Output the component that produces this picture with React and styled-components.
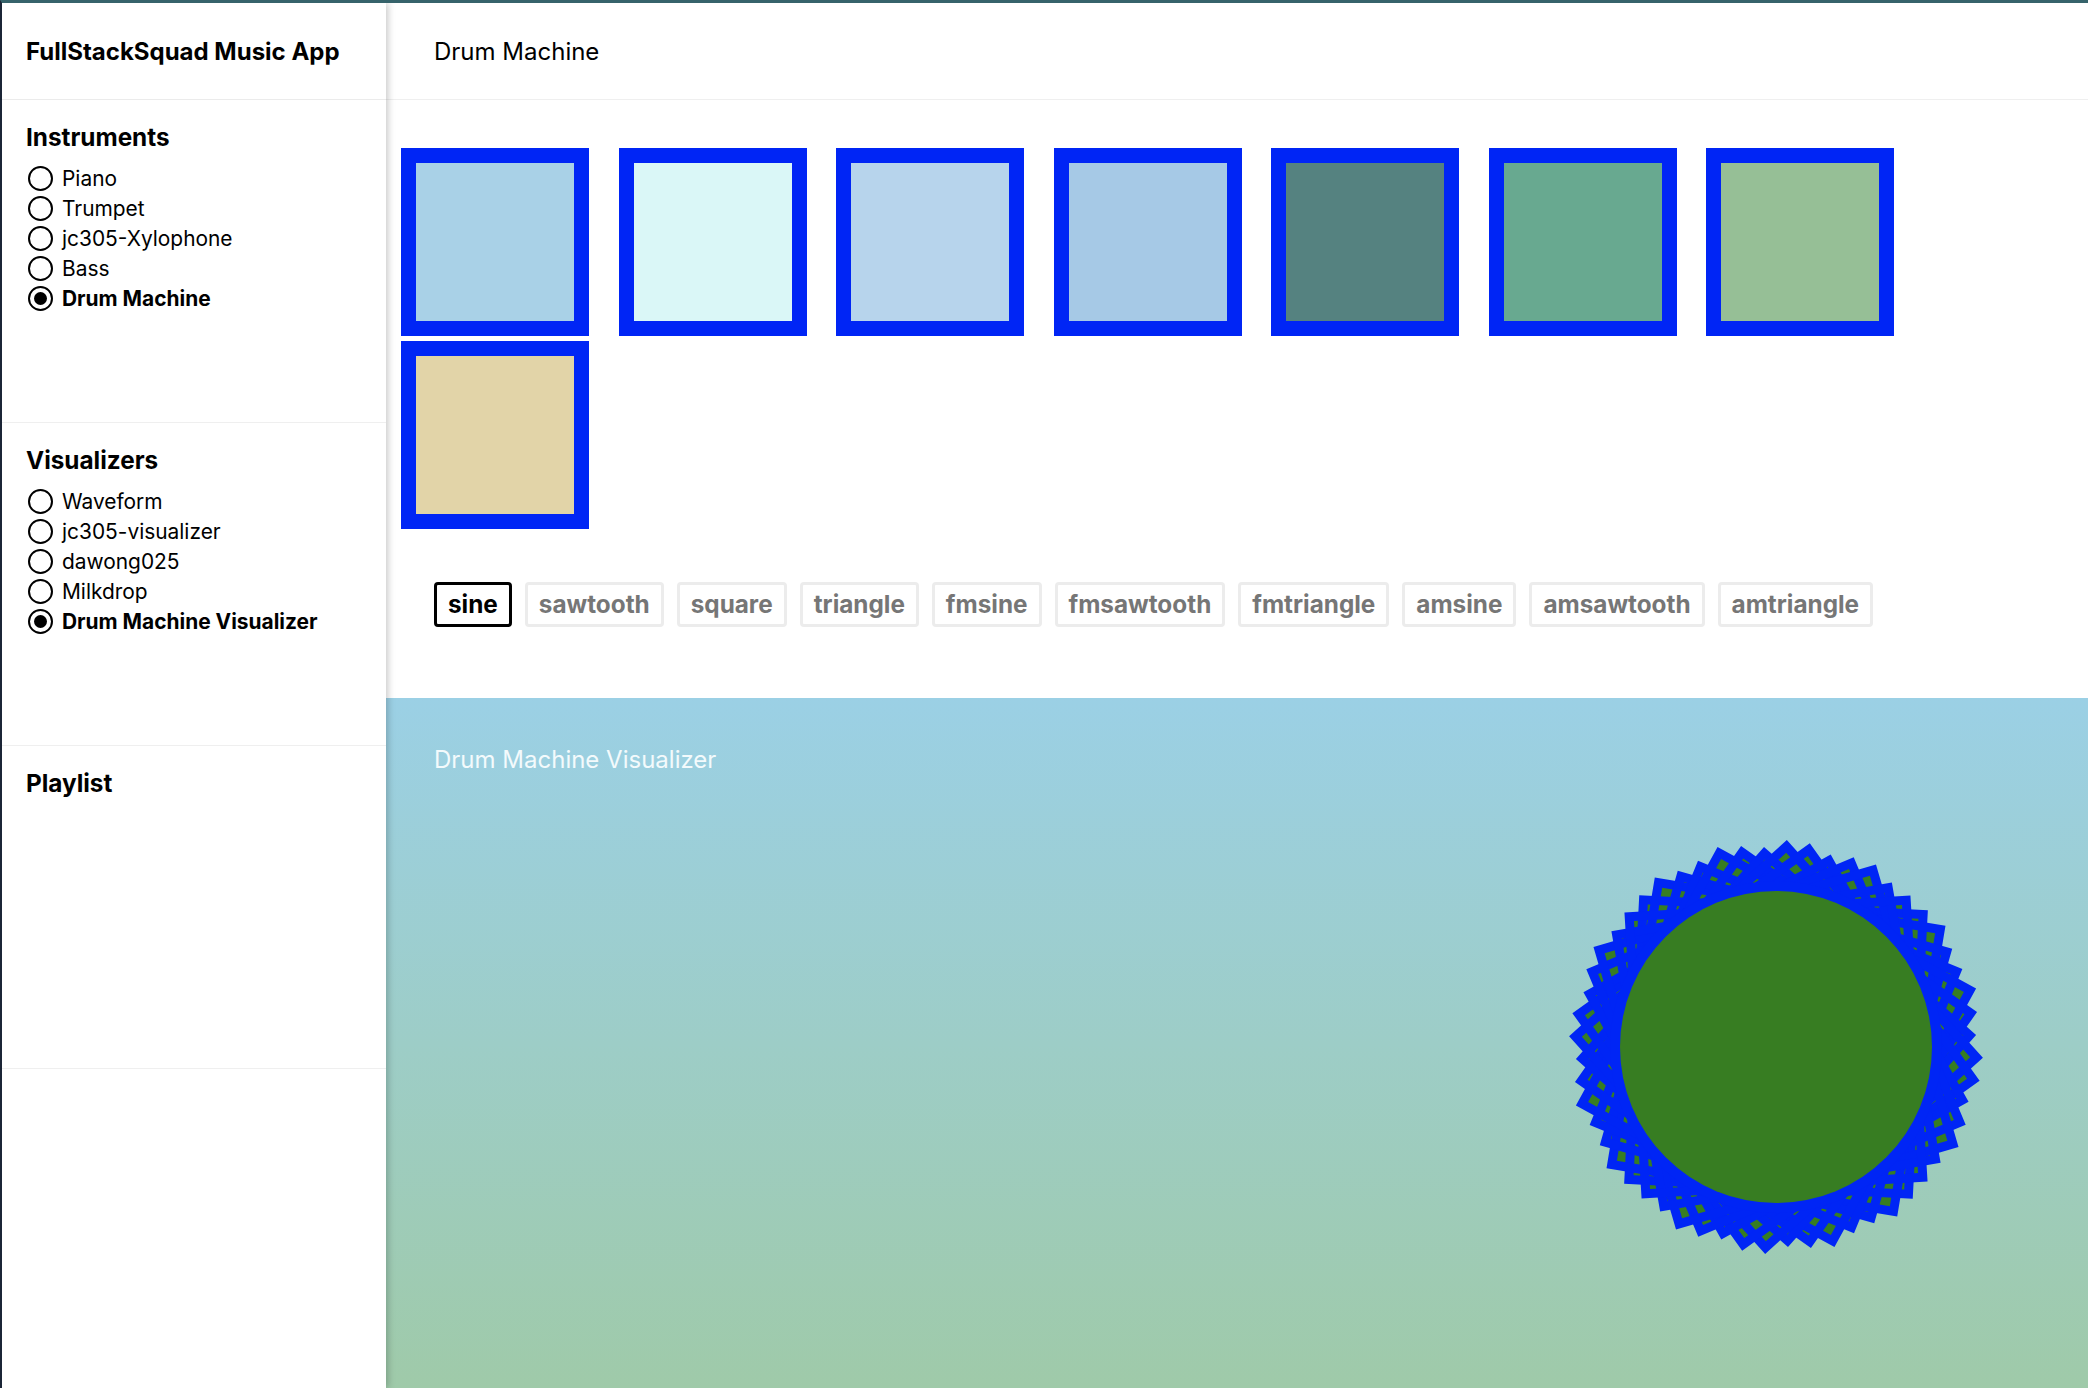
import React from "react";
import styled, { createGlobalStyle } from "styled-components";

const GlobalStyle = createGlobalStyle`
  html, body { margin: 0; padding: 0; background: #ffffff; }
  body { font-family: Inter, "Noto Sans", "Liberation Sans", sans-serif; color: #000; }
  * { box-sizing: border-box; }
`;

const Frame = styled.div`
  display: flex;
  height: 100vh;
  border-top: 3px solid #36636b;
  border-left: 2px solid #1b2536;
  overflow: hidden;
`;

const Sidebar = styled.aside`
  width: 384px;
  flex-shrink: 0;
  background: #ffffff;
  position: relative;
  z-index: 2;
  box-shadow: 2px 0 7px rgba(0, 0, 0, 0.22);
  display: flex;
  flex-direction: column;
`;

const SidebarHeader = styled.div`
  height: 97px;
  border-bottom: 1px solid #ebebeb;
  display: flex;
  align-items: center;
  padding: 0 24px;
  font-size: 24px;
  font-weight: 700;
`;

const Section = styled.section`
  height: 323px;
  border-bottom: 1px solid #efefef;
  padding: 23px 24px 0 24px;
`;

const SectionTitle = styled.h2`
  margin: 0 0 13px 0;
  font-size: 24.3px;
  line-height: 28px;
  font-weight: 700;
`;

const RadioList = styled.div`
  display: flex;
  flex-direction: column;
`;

const RadioItem = styled.label`
  display: flex;
  align-items: center;
  gap: 9px;
  height: 30px;
  font-size: 20.9px;
  font-weight: ${(p) => (p.$checked ? 700 : 400)};
  margin-top: -1px;
  margin-bottom: 1px;
`;

const RadioCircle = styled.span`
  width: 25px;
  height: 25px;
  margin-left: 2px;
  border: 2px solid #000;
  border-radius: 50%;
  display: flex;
  align-items: center;
  justify-content: center;
  flex-shrink: 0;
  &::after {
    content: "";
    width: 13px;
    height: 13px;
    border-radius: 50%;
    background: ${(p) => (p.$checked ? "#000" : "transparent")};
  }
`;

const Main = styled.main`
  flex: 1;
  display: flex;
  flex-direction: column;
  min-width: 0;
`;

const MainHeader = styled.header`
  height: 97px;
  border-bottom: 1px solid #efefef;
  display: flex;
  align-items: center;
  padding-left: 48px;
  font-size: 24px;
  font-weight: 400;
`;

const PadGrid = styled.div`
  display: flex;
  flex-wrap: wrap;
  column-gap: 29.5px;
  row-gap: 5px;
  padding: 48px 15px 0 15px;
`;

const Pad = styled.div`
  width: 188px;
  height: 188px;
  border: 15px solid #0025f5;
  background: ${(p) => p.$color};
`;

const WaveRow = styled.div`
  display: flex;
  gap: 13px;
  padding-left: 48px;
  margin-top: 53px;
`;

const WaveButton = styled.button`
  font-family: Inter, "Noto Sans", "Liberation Sans", sans-serif;
  font-size: 24.3px;
  font-weight: 700;
  line-height: 29px;
  padding: 5px 11px;
  background: #ffffff;
  border: 3px solid ${(p) => (p.$active ? "#000000" : "#ececec")};
  border-radius: 4px;
  color: ${(p) => (p.$active ? "#000000" : "#767676")};
  cursor: pointer;
`;

const Visualizer = styled.div`
  flex: 1;
  margin-top: 71px;
  position: relative;
  background: linear-gradient(180deg, #9bd0e5 0%, #9fcaa9 100%);
  padding: 48px 0 0 48px;
`;

const VisLabel = styled.div`
  position: relative;
  z-index: 1;
  font-size: 24px;
  line-height: 28px;
  color: #f3fafc;
`;

const Canvas = styled.svg`
  position: absolute;
  inset: 0;
  width: 100%;
  height: 100%;
`;

const instruments = ["Piano", "Trumpet", "jc305-Xylophone", "Bass", "Drum Machine"];
const visualizers = ["Waveform", "jc305-visualizer", "dawong025", "Milkdrop", "Drum Machine Visualizer"];
const pads = ["#a9d1e7", "#daf7f7", "#b7d4ec", "#a6c9e6", "#558280", "#68a990", "#96bf96", "#e2d4a8"];
const waves = ["sine", "sawtooth", "square", "triangle", "fmsine", "fmsawtooth", "fmtriangle", "amsine", "amsawtooth", "amtriangle"];

function DrumVis() {
  const cx = 1390;
  const cy = 349;
  const N = 14;
  const squares = Array.from({ length: N }, (_, k) => {
    const half = 140 + 3 * Math.sin(k * 1.9);
    return { half, angle: k * (90 / N) + 3 };
  });
  return (
    <Canvas>
      <g transform={`translate(${cx} ${cy})`}>
        {squares.map((s, i) => (
          <rect
            key={"f" + i}
            x={-s.half}
            y={-s.half}
            width={s.half * 2}
            height={s.half * 2}
            transform={`rotate(${s.angle})`}
            fill="#377d22"
          />
        ))}
        {squares.map((s, i) => (
          <rect
            key={"s" + i}
            x={-s.half}
            y={-s.half}
            width={s.half * 2}
            height={s.half * 2}
            transform={`rotate(${s.angle})`}
            fill="none"
            stroke="#0025f5"
            strokeWidth="9"
          />
        ))}
        <circle r="166" fill="#0025f5" />
        <circle r="156" fill="#377d22" />
      </g>
    </Canvas>
  );
}

export default function App() {
  return (
    <>
      <GlobalStyle />
      <Frame>
        <Sidebar>
          <SidebarHeader>FullStackSquad Music App</SidebarHeader>
          <Section>
            <SectionTitle>Instruments</SectionTitle>
            <RadioList>
              {instruments.map((n) => (
                <RadioItem key={n} $checked={n === "Drum Machine"}>
                  <RadioCircle $checked={n === "Drum Machine"} />
                  {n}
                </RadioItem>
              ))}
            </RadioList>
          </Section>
          <Section>
            <SectionTitle>Visualizers</SectionTitle>
            <RadioList>
              {visualizers.map((n) => (
                <RadioItem key={n} $checked={n === "Drum Machine Visualizer"}>
                  <RadioCircle $checked={n === "Drum Machine Visualizer"} />
                  {n}
                </RadioItem>
              ))}
            </RadioList>
          </Section>
          <Section>
            <SectionTitle>Playlist</SectionTitle>
          </Section>
        </Sidebar>
        <Main>
          <MainHeader>Drum Machine</MainHeader>
          <PadGrid>
            {pads.map((c, i) => (
              <Pad key={i} $color={c} />
            ))}
          </PadGrid>
          <WaveRow>
            {waves.map((w) => (
              <WaveButton key={w} $active={w === "sine"}>
                {w}
              </WaveButton>
            ))}
          </WaveRow>
          <Visualizer>
            <DrumVis />
            <VisLabel>Drum Machine Visualizer</VisLabel>
          </Visualizer>
        </Main>
      </Frame>
    </>
  );
}
